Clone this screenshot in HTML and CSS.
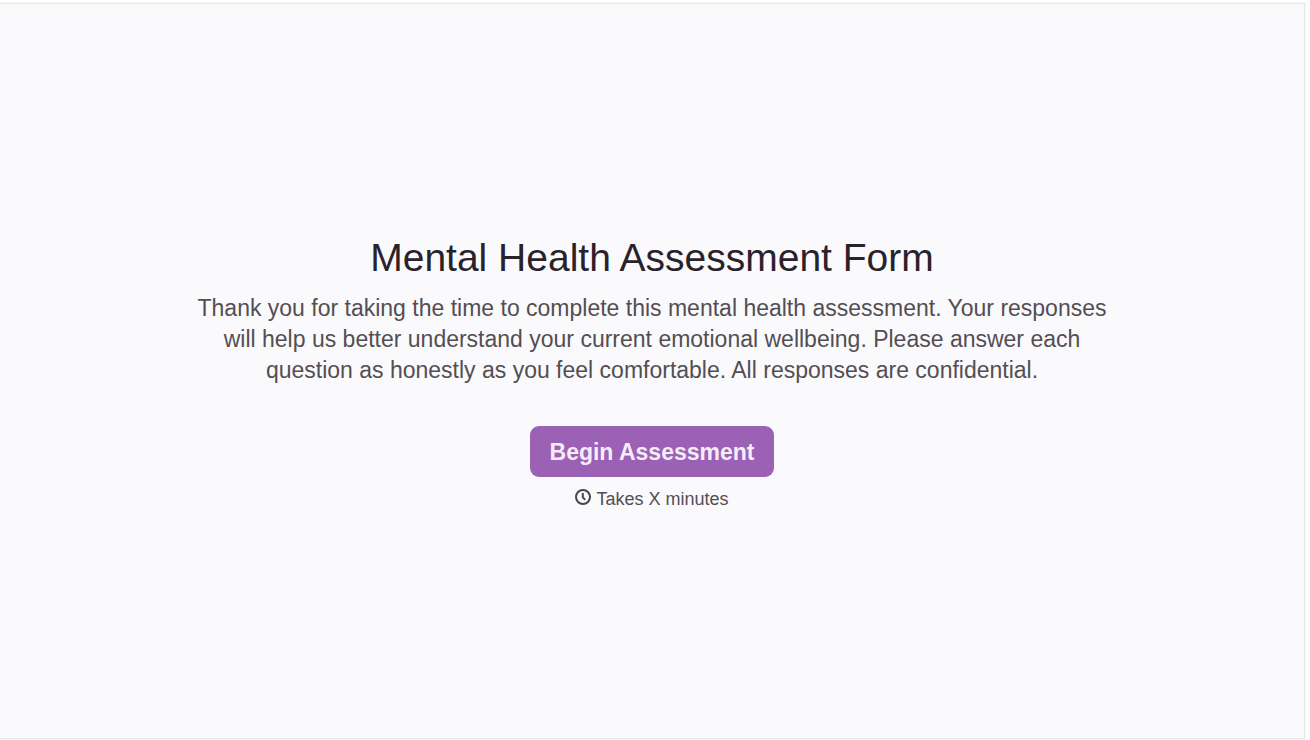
FILE: index.html
```html
<!DOCTYPE html>
<html lang="en">
<head>
<meta charset="utf-8">
<meta name="viewport" content="width=device-width, initial-scale=1">
<title>Mental Health Assessment Form</title>
<link rel="stylesheet" href="styles.css">
</head>
<body>
<main class="welcome">
  <div class="content">
    <h1 class="title">Mental Health Assessment Form</h1>
    <p class="description">Thank you for taking the time to complete this mental health assessment. Your responses will help us better understand your current emotional wellbeing. Please answer each question as honestly as you feel comfortable. All responses are confidential.</p>
    <button class="begin" type="button">Begin Assessment</button>
    <p class="duration">
      <svg class="clock" viewBox="0 0 16 16" aria-hidden="true"><circle cx="8" cy="8" r="7"/><path d="M7.8 4V8.4L10.2 10.8"/></svg>
      <span>Takes X minutes</span>
    </p>
  </div>
</main>
</body>
</html>
```

FILE: styles.css
```css
* { box-sizing: border-box; }

body {
  margin: 0;
  min-height: 100vh;
  display: flex;
  padding: 3px 5px 1px 0;
  background: #fff;
  font-family: "Liberation Sans", Arial, sans-serif;
}

.welcome {
  flex: 1;
  display: flex;
  align-items: center;
  justify-content: center;
  padding: 2px 24px 0;
  background: #fafafd;
  border: 1px solid #e6e6e8;
  border-left: 0;
  box-shadow: 0 0 2px #e9e9eb;
}

.content {
  display: flex;
  flex-direction: column;
  align-items: center;
  max-width: 936px;
  text-align: center;
}

.title {
  margin: 0 0 11px;
  color: #2a222b;
  font-size: 39px;
  font-weight: 400;
  line-height: 48px;
}

.description {
  margin: 0 0 40px;
  color: #544e53;
  font-size: 23px;
  line-height: 31px;
}

.begin {
  height: 51px;
  padding: 1px 20px 0;
  border: 0;
  border-radius: 9px;
  background: #9a61b4;
  color: #f6ecf9;
  font: 700 23px/32px "Liberation Sans", Arial, sans-serif;
  cursor: pointer;
}

.duration {
  display: flex;
  align-items: flex-start;
  gap: 5px;
  margin: 10px 0 0;
  color: #544e53;
  font-size: 18px;
  line-height: 24px;
}

.clock {
  width: 16px;
  height: 16px;
  margin-top: 2px;
  fill: none;
  stroke: #4a4449;
  stroke-width: 2;
}
```
